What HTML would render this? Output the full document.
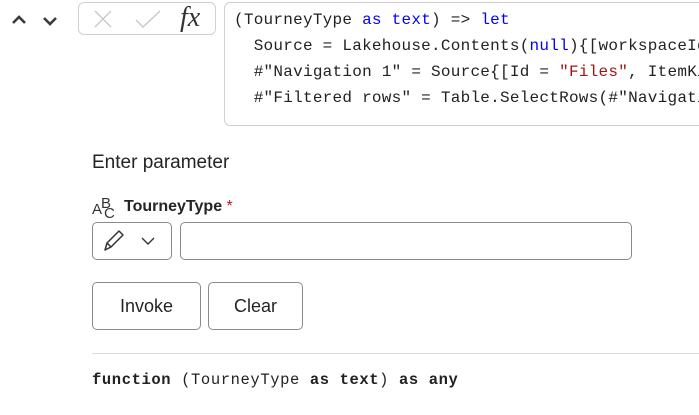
<!DOCTYPE html>
<html><head><style>
body{margin:0;width:699px;height:415px;background:#fff;position:relative;overflow:hidden;font-family:"Liberation Sans",sans-serif;color:#242424}
.abs{position:absolute}
.code{font-family:"Liberation Mono",monospace;font-size:16px;letter-spacing:0.25px;white-space:pre;color:#222}
.kw{color:#0000ff}.str{color:#a31515}
.btn{position:absolute;border:1px solid #8a8a8a;border-radius:5px;background:#fff;font-size:18px;text-align:center;box-sizing:border-box}
</style></head><body>
<svg class="abs" style="left:10px;top:12px" width="56" height="16"><path d="M3 11 L9 5 L15 11" stroke="#3b3b3b" stroke-width="2.6" fill="none"/><path d="M34 6 L40 12 L46 6" stroke="#3b3b3b" stroke-width="2.6" fill="none"/></svg>
<div class="abs" style="left:78px;top:2px;width:138px;height:33px;border:1px solid #d1d1d1;border-radius:6px;box-sizing:border-box"></div>
<svg class="abs" style="left:92px;top:8px" width="70" height="24"><path d="M3 3 L19 19 M19 3 L3 19" stroke="#c8c8c8" stroke-width="1.4"/><path d="M44 12 L51 19 L68 3" stroke="#c8c8c8" stroke-width="1.4" fill="none"/></svg>
<div class="abs" style="left:180px;top:2px;font-family:'Liberation Serif',serif;font-style:italic;font-size:28px;color:#333">fx</div>
<div class="abs" style="left:224px;top:2px;width:475px;height:124px;border:1px solid #d1d1d1;border-right:none;border-radius:6px 0 0 6px;box-sizing:border-box;overflow:hidden">
<div class="abs code" style="left:9px;top:4px;line-height:26px">(TourneyType <span class="kw">as</span> <span class="kw">text</span>) =&gt; <span class="kw">let</span>
  Source = Lakehouse.Contents(<span class="kw">null</span>){[workspaceId
  #"Navigation 1" = Source{[Id = <span class="str">"Files"</span>, ItemKind
  #"Filtered rows" = Table.SelectRows(#"Navigatio</div></div>
<div class="abs" style="left:92px;top:152px;font-size:19px;color:#242424">Enter parameter</div>
<div class="abs" style="left:92px;top:196px;font-size:15px;color:#333;width:30px;height:24px">
<span class="abs" style="left:0;top:5px">A</span><span class="abs" style="left:9px;top:-1px">B</span><span class="abs" style="left:12px;top:9px">C</span></div>
<div class="abs" style="left:124px;top:198px;font-size:16px;font-weight:bold;color:#242424">TourneyType <span style="color:#c50f1f;font-weight:normal">*</span></div>
<div class="abs" style="left:92px;top:222px;width:80px;height:38px;border:1px solid #8a8a8a;border-radius:5px;box-sizing:border-box"></div>
<svg class="abs" style="left:100px;top:228px" width="62" height="26"><path d="M5 22 L7 15 L19 3 L23 7 L11 19 Z M7 15 L11 19" stroke="#333" stroke-width="1.5" fill="none" stroke-linejoin="round"/><path d="M42 10 L48 16 L54 10" stroke="#333" stroke-width="1.4" fill="none"/></svg>
<div class="abs" style="left:180px;top:222px;width:452px;height:38px;border:1px solid #8a8a8a;border-radius:5px;box-sizing:border-box"></div>
<div class="btn" style="left:92px;top:282px;width:109px;height:48px;line-height:46px">Invoke</div>
<div class="btn" style="left:208px;top:282px;width:95px;height:48px;line-height:46px">Clear</div>
<div class="abs" style="left:92px;top:353px;width:607px;height:1px;background:#d9d9d9"></div>
<div class="abs code" style="left:92px;top:371px;font-size:15.5px;letter-spacing:0.6px"><b>function</b> (TourneyType <b>as</b> <b>text</b>) <b>as</b> <b>any</b></div>
</body></html>
